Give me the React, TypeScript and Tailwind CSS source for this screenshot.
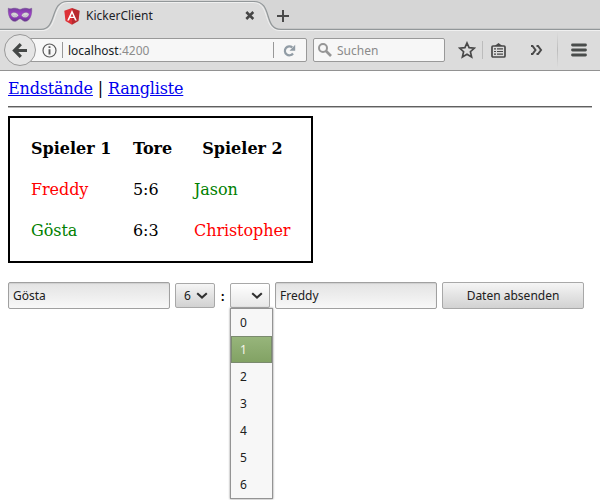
import React from 'react';

const ui = "font-['Noto_Sans',sans-serif] text-[12px]";

function MaskIcon() {
  return (
    <svg className="block" width="26" height="16" viewBox="0 0 26 16">
      <defs>
        <linearGradient id="mask" x1="0" y1="0" x2="0" y2="1">
          <stop offset="0" stopColor="#74409b" />
          <stop offset="0.5" stopColor="#a63fd0" />
          <stop offset="1" stopColor="#65358c" />
        </linearGradient>
      </defs>
      <path fillRule="evenodd" fill="url(#mask)" stroke="#70478f" strokeWidth="0.5" d="M1.300 1.200C4 2.800 5 1 8 1.200c2.500 0 3.500 1.200 5 1.200s2.500-1.200 5-1.200c3 0 4 1.600 6.700 0 .3 5-.6 9.300-3.200 11.800-2.500 2.200-5 1.400-6.800-.5-1-1-2.400-1-3.400 0C9.500 14.400 7 15.200 4.500 13 1.900 10.500 1 6.200 1.300 1.200ZM3.700 7c.8 4.400 5.700 4.800 8 1.500C9.900 4.900 6.300 4.200 3.700 7ZM22.300 7c-2.600-2.800-6.200-2.100-8 1.500 2.300 3.300 7.200 2.900 8-1.500Z" />
      <path d="M5.300 7.500c1.100 2 3.100 2.100 4.600.9M20.700 7.500c-1.100 2-3.100 2.100-4.600.9" fill="none" stroke="#b9a3c9" strokeWidth="0.800" />
    </svg>
  );
}

function AngularIcon() {
  return (
    <svg className="block" width="16" height="17" viewBox="0 0 16 17">
      <path fill="#dd3137" d="M8 0 .3 2.700 1.500 13 8 16.700Z" />
      <path fill="#b9292f" d="m8 0 7.700 2.700L14.500 13 8 16.700Z" />
      <path fill="#fff" fillRule="evenodd" d="M8 2 3.200 12.500H5L6 10.100h4l1 2.400h1.800ZM8 5.400l1.400 3.300H6.600Z" />
    </svg>
  );
}

function TabStrip() {
  return (
    <div className="relative h-[31px] bg-[#d6d6d6]">
      <svg className="absolute inset-0" width="600" height="31" viewBox="0 0 600 31">
        <path fill="#dcdcdc" d="M0 31V30H42C58 30 51 2.500 68 2.500H253C272 2.500 262 30 280 30H600V31Z" />
        <path fill="none" stroke="#f0f0f0" d="M0 30.500H43C58 30.500 52 2.500 68 2.500H253C271 2.500 262 30.500 280 30.500H600" />
        <path fill="none" stroke="#929799" strokeWidth="1.200" d="M0 29.400H41C57 29.400 50 1.500 67 1.500H254C273 1.500 263 29.400 281 29.400H600" />
      </svg>
      <div className={`relative flex h-[30px] items-center ${ui}`}>
        <div className="ml-[7px]"><MaskIcon /></div>
        <div className="ml-[31px] pt-[2px]"><AngularIcon /></div>
        <span className="ml-[6px] w-[159px] pt-px leading-[30px] text-[#1c2226]">KickerClient</span>
        <svg className="mt-px" width="10" height="9" viewBox="0 0 10 9"><path d="m1.300 1 7 7M8.300 1l-7 7" stroke="#454545" strokeWidth="2.500" /></svg>
        <svg className="mt-[2px] ml-[22px]" width="12" height="12" viewBox="0 0 12 12"><path d="M6 0v12M0 6h12" stroke="#4a4a4a" strokeWidth="2" /></svg>
      </div>
    </div>
  );
}

function Toolbar() {
  return (
    <div className={`flex h-[40px] items-center border-b border-[#929292] bg-[#dcdcdc] pb-px ${ui}`}>
      <div className="z-10 ml-[4px] flex h-[32px] w-[32px] shrink-0 items-center justify-center rounded-full border border-[#999] bg-[#e5e5e5]">
        <svg width="16" height="15" viewBox="0 0 16 15"><path d="M15 7.500H3.500M8.800 1.200 2.500 7.500l6.300 6.300" fill="none" stroke="#454847" strokeWidth="3.200" /></svg>
      </div>
      <div className="-ml-[8px] flex h-[24px] w-[279px] shrink-0 items-center rounded-[2px] border border-[#999] bg-[#f7f7f7]">
        <svg className="ml-[13px]" width="15" height="15" viewBox="0 0 15 15">
          <circle cx="7.500" cy="7.500" r="6.500" fill="none" stroke="#5b5b5b" strokeWidth="1.200" />
          <path d="M7.500 6.200V11.500M7.500 3.300v1.800" stroke="#5b5b5b" strokeWidth="1.900" />
        </svg>
        <div className="ml-[5px] h-[16px] w-px bg-[#989898]" />
        <span className="ml-[5px] w-[205px] pt-[2px] leading-[22px] text-[#161b1f]">localhost<span className="text-[#8c8c8c]">:4200</span></span>
        <div className="h-[16px] w-px bg-[#989898]" />
        <svg className="ml-[9px]" width="13" height="13" viewBox="0 0 13 13">
          <path d="M9.300 3.400A4.500 4.500 0 1 0 10 9.500" fill="none" stroke="#919ca5" strokeWidth="2.200" /><path d="M12.200.8v5.900H6.500Z" fill="#919ca5" />
        </svg>
      </div>
      <div className="ml-[6px] flex h-[24px] w-[132px] shrink-0 items-center rounded-[2px] border border-[#999] bg-[#f7f7f7]">
        <svg className="ml-[4px]" width="14" height="14" viewBox="0 0 14 14"><circle cx="5" cy="5" r="4" fill="none" stroke="#969696" strokeWidth="2" /><path d="m8 8 5 5" stroke="#969696" strokeWidth="2.600" /></svg>
        <span className="ml-[5px] pt-[2px] leading-[22px] text-[#8a8a8a]">Suchen</span>
      </div>
      <svg className="ml-[13px] shrink-0" width="18" height="18" viewBox="0 0 18 18"><path d="m9 2 2.100 4.700 5.200.5-3.900 3.500 1.200 5.200L9 13.200l-4.600 2.700 1.200-5.200-3.900-3.500 5.200-.5Z" fill="none" stroke="#494949" strokeWidth="1.700" /></svg>
      <div className="ml-[6px] h-[18px] w-px bg-[#bcbcbc]" />
      <svg className="ml-[8px] shrink-0" width="15" height="15" viewBox="0 0 15 15"><path d="M3.500 3 7.500 0l4 3Z" fill="#494949" /><rect x="1" y="3" width="13" height="11" rx="1" fill="none" stroke="#494949" strokeWidth="1.700" /><path d="M3 5.900h2M6 5.900h6M3 8.500h2M6 8.500h6M3 11.100h2M6 11.100h6" stroke="#494949" strokeWidth="1.200" /></svg>
      <svg className="ml-[24px] shrink-0" width="13" height="10" viewBox="0 0 13 10"><path d="M1 1h1.500l3 4-3 4H1M6.500 1H8l3 4-3 4H6.500" fill="none" stroke="#494949" strokeWidth="2" /></svg>
      <div className="ml-[14px] h-[36px] w-px bg-linear-to-b from-[#dcdcdc] via-[#bcbcbc] to-[#dcdcdc]" />
      <svg className="ml-[13px] shrink-0" width="16" height="15" viewBox="0 0 16 15"><path d="M1.500 2h13M1.500 7h13M1.500 12h13" stroke="#494c4b" strokeWidth="2.800" strokeLinecap="round" /></svg>
    </div>
  );
}

function Chevron() {
  return <svg width="12" height="8" viewBox="0 0 12 8"><path d="m1.200 1.300 4.800 4.200 4.800-4.200" fill="none" stroke="#303030" strokeWidth="2.100" /></svg>;
}

function TextField({ value }: { value: string }) {
  return <input readOnly value={value} className={`h-[27px] w-[162px] rounded-[2px] border border-[#a0a0a0] bg-linear-to-b from-[#e3e3e3] to-[#f8f8f8] px-[4px] text-[#202020] shadow-[inset_0_1px_1px_#cfcfcf] outline-none ${ui}`} />;
}

const scores = [0, 1, 2, 3, 4, 5, 6];

export default function App() {
  return (
    <div className="h-[500px] w-[600px] overflow-hidden bg-white font-['DejaVu_Serif',serif] text-[16px] text-black">
      <TabStrip />
      <Toolbar />
      <main className="px-[8px] pt-[8px]">
        <nav className="h-[19px] leading-[19px] tracking-[-0.17px]">
          <a className="text-[#0000ee] underline" href="#">Endstände</a> | <a className="text-[#0000ee] underline" href="#">Rangliste</a>
        </nav>
        <hr className="mt-[8px] h-[2px] border-t border-b border-t-[#606060] border-b-[#b8b8b8]" />
        <div className="mt-[8px] grid h-[147px] w-[305px] grid-cols-[80px_39px_97px] grid-rows-[19px_19px_19px] gap-x-[22px] gap-y-[22px] border-2 border-black pt-[21px] pl-[21px] leading-[19px] tracking-[-0.08px] whitespace-nowrap">
          <b className="tracking-normal">Spieler 1</b><b>Tore</b><b className="text-center tracking-normal">Spieler 2</b>
          <span className="text-[#ff0000]">Freddy</span><span>5:6</span><span className="text-[#008000]">Jason</span>
          <span className="text-[#008000]">Gösta</span><span>6:3</span><span className="text-[#ff0000]">Christopher</span>
        </div>
        <form className="mt-[19px] flex h-[27px] items-center">
          <TextField value="Gösta" />
          <div className={`ml-[5px] flex h-[25px] w-[40px] items-center rounded-[2px] border border-[#a8a8a8] bg-linear-to-b from-[#f5f5f5] to-[#d2d2d2] pl-[8px] text-[#202020] ${ui}`}>
            <span className="w-[12px]">6</span><Chevron />
          </div>
          <span className="w-[15px] pl-[5px]">:</span>
          <div className="relative flex h-[25px] w-[40px] items-center rounded-[2px] border border-[#a8a8a8] bg-linear-to-b from-white to-[#e7e7e7] pl-[20px]">
            <Chevron />
            <ul className={`absolute top-[24px] -left-[1px] w-[43px] border border-[#949494] bg-[#f7f7f7] text-[#202020] shadow-[0_0_2px_#888] ${ui}`}>
              {scores.map((score) => (
                <li key={score} className={`flex h-[27px] items-center px-[8px] ${score === 1 ? 'border border-[#7a8a6e] bg-linear-to-b from-[#97b57b] to-[#82a264] text-[#f5f5e8]' : 'border border-transparent'}`}>{score}</li>
              ))}
            </ul>
          </div>
          <div className="ml-[5px]"><TextField value="Freddy" /></div>
          <button type="button" className={`ml-[5px] h-[27px] w-[142px] rounded-[2px] border border-[#a8a8a8] bg-linear-to-b from-[#f5f5f5] to-[#d2d2d2] text-[#202020] ${ui}`}>Daten absenden</button>
        </form>
      </main>
    </div>
  );
}
